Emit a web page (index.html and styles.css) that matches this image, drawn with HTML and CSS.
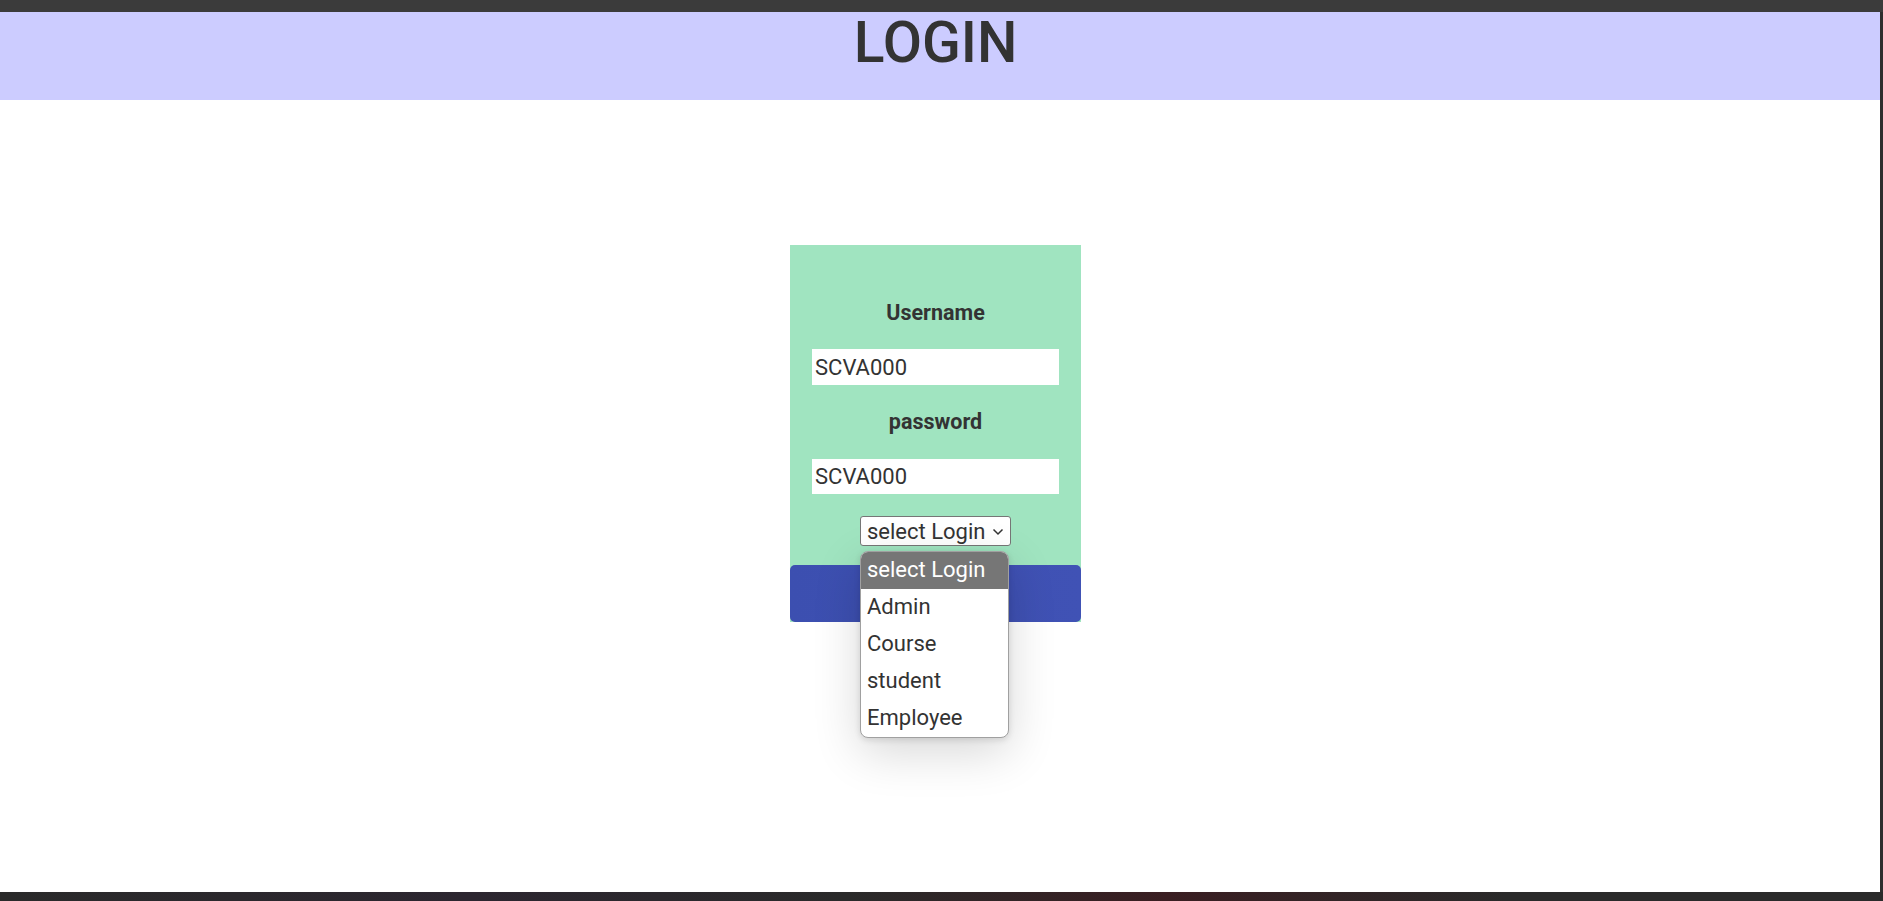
FILE: index.html
```
<!DOCTYPE html>
<html lang="en">
<head>
<meta charset="utf-8">
<title>Login</title>
<link rel="stylesheet" href="styles.css">
</head>
<body>
<div class="topbar"></div>
<div class="window">
  <div class="page">
    <header class="header">
      <h1 class="title">LOGIN</h1>
    </header>
    <main class="content">
      <form class="card">
        <label class="label label-user">Username</label>
        <input class="field" type="text" value="SCVA000">
        <label class="label label-pass">password</label>
        <input class="field field-pass" type="text" value="SCVA000">
        <div class="select-wrap">
          <div class="select">
            <span>select Login</span>
            <svg class="chev" width="12" height="8" viewBox="0 0 12 8"><path d="M1.5 1.5 L6 6 L10.5 1.5" fill="none" stroke="#333" stroke-width="1.5"/></svg>
          </div>
          <ul class="dropdown">
            <li class="opt active">select Login</li>
            <li class="opt">Admin</li>
            <li class="opt">Course</li>
            <li class="opt">student</li>
            <li class="opt">Employee</li>
          </ul>
        </div>
        <div class="button"></div>
      </form>
    </main>
  </div>
  <div class="edge"></div>
</div>
<div class="bottombar"></div>
</body>
</html>
```
FILE: styles.css
```
* { box-sizing: border-box; }
html, body { margin: 0; padding: 0; }
body {
  background: #3b3b3b;
  font-family: Roboto, "Noto Sans", Arial, sans-serif;
  color: #333;
  height: 901px;
  overflow: hidden;
}
.topbar { height: 12px; background: #3b3b3b; }
.window { display: flex; height: 880px; }
.page { width: 1880px; height: 880px; background: #fff; position: relative; }
.edge { width: 3px; background: #2e2e2e; }
.bottombar {
  height: 9px;
  background: linear-gradient(90deg, #2a2a2a 0%, #2c2630 25%, #2a2a2a 45%, #3a1e22 62%, #2a2a2a 80%, #2a2a2a 100%);
}
.header {
  height: 88px;
  background: #ccccff;
  padding-right: 9px;
  display: flex;
  justify-content: center;
}
.title {
  margin: 0;
  padding-top: 2px;
  font-size: 57px;
  line-height: 58px;
  font-weight: 500;
  color: #333;
}
.content {
  display: flex;
  justify-content: center;
  padding-right: 9px;
  padding-top: 145px;
}
.card {
  width: 291px;
  background: #a0e4c0;
  display: flex;
  flex-direction: column;
  align-items: center;
  margin: 0;
}
.label {
  display: block;
  font-size: 21.5px;
  line-height: 26px;
  font-weight: 700;
  color: #333;
}
.label-user { margin-top: 55px; }
.label-pass { margin-top: 24px; }
.field {
  margin-top: 23px;
  width: 247px;
  height: 36px;
  border: none;
  outline: none;
  background: #fff;
  font-family: Roboto, "Noto Sans", Arial, sans-serif;
  font-size: 22px;
  color: #333;
  padding: 0 0 0 3px;
}
.field-pass { margin-top: 24px; height: 35px; }
.select-wrap {
  margin-top: 22px;
  position: relative;
}
.select {
  width: 151px;
  height: 30px;
  background: #fff;
  border: 1px solid #767676;
  border-radius: 3px;
  display: flex;
  align-items: center;
  justify-content: space-between;
  padding: 0 6px 0 6px;
  font-size: 22px;
  color: #333;
}
.chev { display: block; margin-top: 2px; }
.dropdown {
  position: absolute;
  left: 0;
  top: 35px;
  width: 149px;
  margin: 0;
  padding: 0;
  list-style: none;
  background: #fff;
  border: 1px solid #a0a0a0;
  border-radius: 8px;
  overflow: hidden;
  box-shadow: 0 14px 48px rgba(0,0,0,0.16), 0 2px 6px rgba(0,0,0,0.12);
  z-index: 5;
}
.opt {
  height: 37px;
  line-height: 36px;
  font-size: 22px;
  padding-left: 6px;
  color: #333;
}
.opt.active { background: #767676; color: #fff; }
.button {
  margin-top: 19px;
  width: 291px;
  height: 57px;
  background: linear-gradient(90deg, #3c4fb0, #4052b5);
  border-radius: 5px;
}
```
